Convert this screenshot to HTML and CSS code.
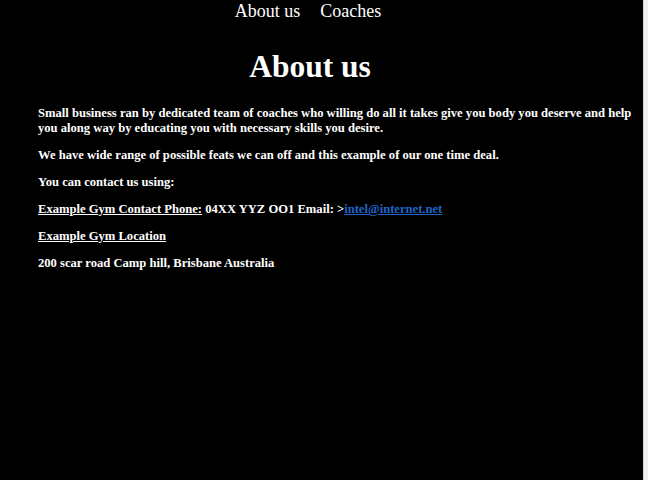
FILE: index.html
```html
<!DOCTYPE html>
<html>
<head>
<meta charset="utf-8">
<link rel="stylesheet" href="styles.css">
</head>
<body>
<div class="page">
  <nav class="nav">
    <a class="nav-link" href="#">About us</a>
    <a class="nav-link" href="#">Coaches</a>
  </nav>
  <h1 class="title">About us</h1>
  <main class="content">
    <p>Small business ran by dedicated team of coaches who willing do all it takes give you body you deserve and help you along way by educating you with necessary skills you desire.</p>
    <p>We have wide range of possible feats we can off and this example of our one time deal.</p>
    <p>You can contact us using:</p>
    <p><a class="plain-link" href="#">Example Gym Contact Phone:</a> 04XX YYZ OO1 Email: &gt;<a class="mail" href="#">intel@internet.net</a></p>
    <p><a class="plain-link" href="#">Example Gym Location</a></p>
    <p>200 scar road Camp hill, Brisbane Australia</p>
  </main>
</div>
</body>
</html>
```
FILE: styles.css
```css
html, body {
  margin: 0;
  padding: 0;
  background: #f0f0f0;
}
.page {
  width: 643px;
  height: 480px;
  background: #000;
  color: #fff;
  font-family: "Liberation Serif", "Times New Roman", serif;
  border-right: 1px solid #d8d8d8;
  overflow: hidden;
}
.nav {
  width: 616px;
  display: flex;
  justify-content: center;
  gap: 20px;
  font-size: 18px;
  line-height: 22px;
}
.nav-link {
  color: #fff;
  text-decoration: none;
}
.title {
  width: 620px;
  text-align: center;
  font-size: 31.5px;
  margin: 26px 0 21px;
  line-height: 37px;
}
.content {
  padding-left: 38px;
  width: 600px;
  font-size: 12.6px;
  font-weight: bold;
  line-height: 15px;
}
.content p {
  margin: 0 0 12px;
}
.plain-link {
  color: #fff;
  text-decoration: underline;
}
.mail {
  color: #1f64c8;
  text-decoration: underline;
}
```
